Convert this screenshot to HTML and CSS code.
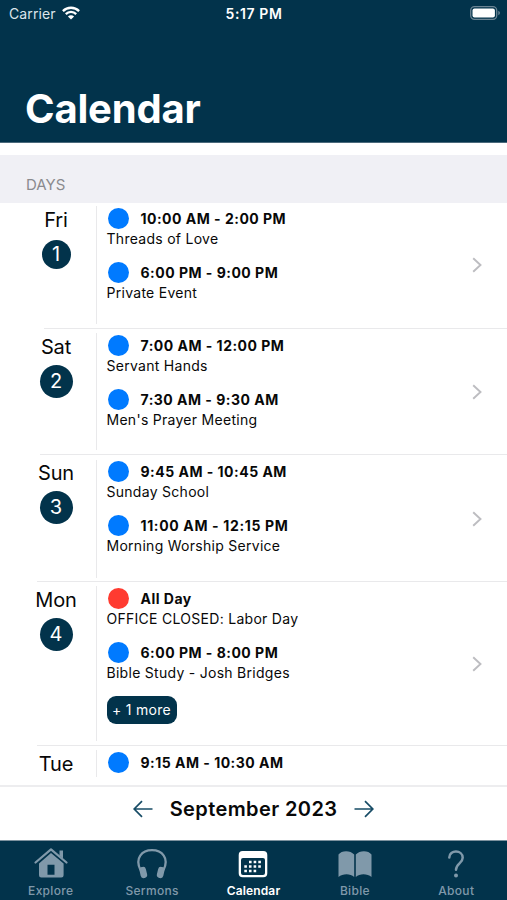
FILE: index.html
```html
<!DOCTYPE html>
<html lang="en">
<head>
<meta charset="utf-8">
<title>Calendar</title>
<link rel="stylesheet" href="styles.css">
</head>
<body>
<div class="app">
  <header class="header">
    <div class="status">
      <div class="carrier"><span>Carrier</span>
        <svg width="18" height="14" viewBox="0 0 18 14" fill="none" stroke="#fff" stroke-width="2.3"><path d="M.9 5.1C5.4.6 12.6.6 17.1 5.1M3.8 8.1c2.9-2.9 7.5-2.9 10.4 0"/><path d="M9 13.6 5.9 10.5c1.7-1.7 4.5-1.7 6.2 0z" fill="#fff" stroke="none"/></svg>
      </div>
      <div class="clock">5:17 PM</div>
      <div class="battery"><svg width="31" height="14" viewBox="0 0 31 14"><rect x=".7" y=".7" width="26" height="12.6" rx="3.8" fill="none" stroke="#6b8494" stroke-width="1.3"/><rect x="2.5" y="2.5" width="22.4" height="9" rx="2" fill="#fff"/><path d="M28.3 4.8v4.4c2.2-.8 2.2-3.6 0-4.4z" fill="#6b8494"/></svg></div>
    </div>
    <h1>Calendar</h1>
  </header>
  <div class="section">DAYS</div>
  <main class="list">
    <section class="row first">
      <div class="day"><span>Fri</span><b class="small">1</b></div>
      <div class="events">
        <div class="event"><div class="time"><i></i>10:00 AM - 2:00 PM</div><p>Threads of Love</p></div>
        <div class="event"><div class="time"><i></i>6:00 PM - 9:00 PM</div><p>Private Event</p></div>
      </div>
      <svg class="chevron" width="10" height="16" viewBox="0 0 10 16"><path d="M1.2 1.2 8.5 8l-7.3 6.8"/></svg>
    </section>
    <section class="row second">
      <div class="day"><span>Sat</span><b>2</b></div>
      <div class="events">
        <div class="event"><div class="time"><i></i>7:00 AM - 12:00 PM</div><p>Servant Hands</p></div>
        <div class="event"><div class="time"><i></i>7:30 AM - 9:30 AM</div><p>Men's Prayer Meeting</p></div>
      </div>
      <svg class="chevron" width="10" height="16" viewBox="0 0 10 16"><path d="M1.2 1.2 8.5 8l-7.3 6.8"/></svg>
    </section>
    <section class="row third">
      <div class="day"><span>Sun</span><b>3</b></div>
      <div class="events">
        <div class="event"><div class="time"><i></i>9:45 AM - 10:45 AM</div><p>Sunday School</p></div>
        <div class="event"><div class="time wide"><i></i>11:00 AM - 12:15 PM</div><p>Morning Worship Service</p></div>
      </div>
      <svg class="chevron" width="10" height="16" viewBox="0 0 10 16"><path d="M1.2 1.2 8.5 8l-7.3 6.8"/></svg>
    </section>
    <section class="row tall">
      <div class="day"><span>Mon</span><b>4</b></div>
      <div class="events">
        <div class="event"><div class="time"><i class="red"></i>All Day</div><p>OFFICE CLOSED: Labor Day</p></div>
        <div class="event"><div class="time"><i></i>6:00 PM - 8:00 PM</div><p>Bible Study - Josh Bridges</p></div>
        <span class="more">+ 1 more</span>
      </div>
      <svg class="chevron" width="10" height="16" viewBox="0 0 10 16"><path d="M1.2 1.2 8.5 8l-7.3 6.8"/></svg>
    </section>
    <section class="row last">
      <div class="day"><span>Tue</span></div>
      <div class="events">
        <div class="time"><i></i>9:15 AM - 10:30 AM</div>
      </div>
    </section>
  </main>
  <div class="month">
    <svg width="20" height="18" viewBox="0 0 20 18"><path d="M19.500 9H1.200M9 1.200 1.200 9 9 16.800"/></svg>
    <span>September 2023</span>
    <svg width="20" height="18" viewBox="0 0 20 18"><path d="M.5 9h18.300M11 1.200 18.800 9 11 16.800"/></svg>
  </div>
  <nav class="tabs">
    <div class="tab"><svg width="34" height="32" viewBox="0 0 34 32"><path d="M1.500 15.500 17 2.300l15.500 13.200" fill="none" stroke="currentColor" stroke-width="2.200" stroke-linecap="round" stroke-linejoin="round"/><path fill="currentColor" fill-rule="evenodd" d="M25.500 3.500h3.500v8l-3.500-3zM5 16.400 17 6 29.600 16.400v11.800a2.300 2.300 0 0 1-2.300 2.300H7.300a2.300 2.300 0 0 1-2.300-2.300zM13.500 17.800v10h7v-10z"/></svg><span>Explore</span></div>
    <div class="tab"><svg width="34" height="32" viewBox="0 0 34 32"><path d="M5.500 23C-.5 11 7 3.200 17 3.200S34.500 11 28.500 23" fill="none" stroke="currentColor" stroke-width="2.300"/><rect x="5" y="19.800" width="6.600" height="11.300" rx="3" transform="rotate(-13 8.300 25.500)" fill="currentColor"/><rect x="22.400" y="19.800" width="6.600" height="11.300" rx="3" transform="rotate(13 25.700 25.500)" fill="currentColor"/></svg><span>Sermons</span></div>
    <div class="tab active"><svg width="34" height="32" viewBox="0 0 34 32"><path fill="currentColor" fill-rule="evenodd" d="M6.700 4h20.600a4 4 0 0 1 4 4v18.200a4 4 0 0 1-4 4H6.700a4 4 0 0 1-4-4V8a4 4 0 0 1 4-4zM7 11a2 2 0 0 0-2 2v13a2 2 0 0 0 2 2h20a2 2 0 0 0 2-2V13a2 2 0 0 0-2-2z"/><path d="M13 15h13M8.300 19.500h18M8.300 24h13" stroke="currentColor" stroke-width="2.600" stroke-dasharray="2.600 2.050"/></svg><span>Calendar</span></div>
    <div class="tab"><svg width="34" height="32" viewBox="0 0 34 32" fill="currentColor"><path d="M.5 7.500C3.500 3 12.500 3 16.200 7.500V30C12 26 4.500 26.500.5 30zM17.800 7.500C21.500 3 30.500 3 33.500 7.500V30c-4-3.500-11.500-4-15.700 0z"/></svg><span>Bible</span></div>
    <div class="tab"><svg width="34" height="32" viewBox="0 0 34 32"><path d="M10.300 10.500c0-8 13.400-8 13.400.3 0 5.500-6.700 5.700-6.700 12" fill="none" stroke="currentColor" stroke-width="2.500" stroke-linecap="round"/><circle cx="17" cy="28.500" r="2" fill="currentColor"/></svg><span>About</span></div>
  </nav>
</div>
</body>
</html>
```
FILE: styles.css
```css
* { box-sizing: border-box; }
body { margin: 0; font-family: Inter, "Liberation Sans", sans-serif; background: #fff; color: #080808; }
.app { height: 900px; display: flex; flex-direction: column; overflow: hidden; white-space: nowrap; }
.header { height: 143px; flex: none; background: #02334b; color: #fff; border-bottom: 1px solid #4b6a7c; }
.status { height: 28px; display: grid; grid-template-columns: 1fr auto 1fr; align-items: center; padding: 0 6px 0 9px; font-size: 14px; line-height: 28px; }
.carrier { display: flex; align-items: center; gap: 6px; color: #dce5eb; letter-spacing: .1px; }
.carrier svg { margin-top: -2px; }
.clock { font-weight: 600; letter-spacing: .6px; padding-right: 2px; }
.battery { display: flex; justify-content: flex-end; margin-top: -2px; }
h1 { margin: 56px 0 0 25px; font-size: 40px; line-height: 50px; font-weight: 700; letter-spacing: -.2px; }
.section { flex: none; height: 48px; margin-top: 12px; padding: 12px 26px 0; background: #f0f0f5; color: #8a8a8e; font-size: 15px; line-height: 36px; letter-spacing: 0; }
.list { height: 582px; flex: none; overflow: hidden; }
.row { height: 126.700px; display: grid; grid-template-columns: 96px 1fr 35px; background: linear-gradient(#e9e9eb, #e9e9eb) 44px 100% / 100% 1px no-repeat; }
.first { height: 125.600px; }
.first .day, .first .events { margin-top: -1px; }
.second { background-position-x: 40px; }
.third { background-position-x: 37px; }
.tall { height: 163.700px; background-position-x: 37px; }
.last { height: 36px; background: none; }
.day { display: flex; flex-direction: column; align-items: center; padding: 5px 0 0 16px; }
.day span { font-size: 20px; line-height: 26px; letter-spacing: -.2px; }
.day b { width: 33px; height: 33px; border-radius: 50%; margin-top: 5px; background: #02334b; color: #fff; font-size: 20px; line-height: 33px; font-weight: 400; text-align: center; }
.day b.small { width: 29px; height: 29px; line-height: 29px; margin-top: 7px; }
.events { padding: 6px 0 0 10.500px; background: linear-gradient(#e9e9eb, #e9e9eb) 0 50% / 1px calc(100% - 9px) no-repeat; }
.event { height: 54px; }
.time { display: flex; align-items: center; gap: 11.500px; height: 21px; padding-left: 1.500px; font-size: 14px; font-weight: 700; letter-spacing: .49px; }
.time i { width: 21px; height: 21px; border-radius: 50%; background: #007aff; }
.time .red { background: #ff3b30; }
.wide { letter-spacing: .65px; }
.event p { margin: 0; font-size: 14px; line-height: 20.500px; letter-spacing: .28px; }
.more { display: block; width: 70px; height: 27.500px; margin-top: .5px; border-radius: 9px; background: #02334b; color: #fff; font-size: 14px; line-height: 27px; letter-spacing: .3px; text-align: center; }
.chevron { align-self: center; fill: none; stroke: #bdbdc1; stroke-width: 1.900; }
.first .chevron { margin-top: -1px; }
.month { height: 55px; flex: none; display: flex; justify-content: center; align-items: center; gap: 17px; padding-bottom: 10px; border-top: 2px solid #ededef; font-size: 20px; font-weight: 600; letter-spacing: .4px; }
.month svg { fill: none; stroke: #174c66; stroke-width: 1.700; }
.tabs { height: 60px; flex: none; display: grid; grid-template-columns: repeat(5, 1fr); background: #02334b; border-top: 1px solid #7d929f; }
.tab { display: flex; flex-direction: column; align-items: center; padding-top: 6px; color: #8099aa; font-size: 12px; font-weight: 500; letter-spacing: .3px; }
.tab span { line-height: 24px; }
.active { color: #fff; font-weight: 600; letter-spacing: .15px; }
```
